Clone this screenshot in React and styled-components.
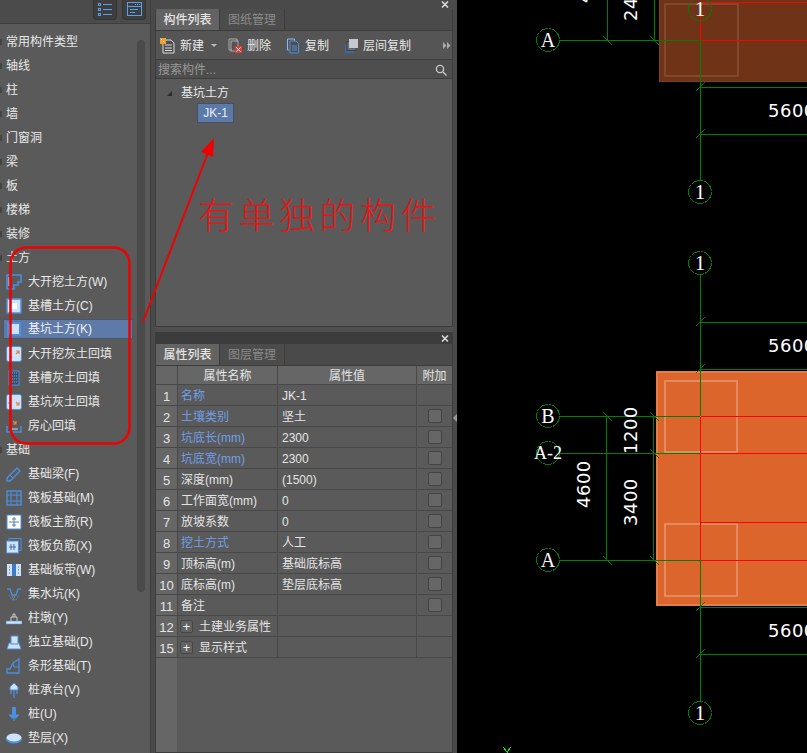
import React from "react";
import styled, { createGlobalStyle } from "styled-components";

const Global = createGlobalStyle`
  html, body { margin: 0; padding: 0; background: #000; }
  * { box-sizing: border-box; }
`;
const FONT = `"Liberation Sans", "Noto Sans CJK SC", sans-serif`;

const Page = styled.div`
  position: relative; display: flex; width: 807px; height: 753px; overflow: hidden;
  font: 12px/1 ${FONT}; color: #e8e8e8; background: #4c4c4c;
`;
const Sidebar = styled.aside`
  position: relative; width: 151px; flex: none; background: #5a5a5a; border-right: 1px solid #3c3c3c; overflow: hidden;
`;
const SideTop = styled.div`
  height: 24px; display: flex; justify-content: flex-end; align-items: flex-end; gap: 5px; padding: 0 4px 3px 0;
  background: #4b4b4b; border-bottom: 1px solid #3e3e3e;
`;
const SideBtn = styled.div`
  width: 24px; height: 21px; background: #3e3e3e; border: 1px solid #333; border-top: 0; border-radius: 0 0 4px 4px;
  display: flex; align-items: center; justify-content: center;
`;
const SideList = styled.div`padding-top: 5px;`;
const SideRow = styled.div`
  position: relative; height: 24px; display: flex; align-items: center; gap: 6px;
  padding: 1px 0 0 6px; color: #e8e8e8; white-space: nowrap;
  &::before {
    content: ""; display: ${p => (p.$section ? "block" : "none")}; position: absolute; left: 0; top: 10px;
    width: 2px; height: 6px; background: #444;
  }
`;
const Selected = styled(SideRow)`
  margin-left: 3px; width: 130px; padding: 0 0 0 2px; height: 20px; margin-top: 2px; margin-bottom: 2px;
  background: #5e7aa9; border: 1px solid #48566e; color: #f0f0f0;
`;
const Scroll = styled.div`
  position: absolute; left: 137px; top: 40px; width: 8px; height: 552px; background: #4a4a4a; border-radius: 4px;
`;
const Middle = styled.div`
  width: 306px; flex: none; display: flex; flex-direction: column; padding: 0 4px; background: #4a4a4a;
`;
const Strip = styled.div`
  height: ${p => p.$h}px; flex: none; display: flex; justify-content: flex-end; align-items: center; padding-right: 4px;
  background: ${p => p.$bg}; color: #ddd;
`;
const Panel = styled.section`
  flex: ${p => (p.$grow ? "1" : "none")}; height: ${p => (p.$grow ? "auto" : "318px")};
  display: flex; flex-direction: column; background: #5a5a5a; border: 1px solid #3c3c3c; border-top: 0;
`;
const Gap = styled.div`height: 5px; flex: none; background: #4f4f4f;`;
const Tabs = styled.div`display: flex; height: 22px; flex: none; background: #4a4a4a; border-bottom: 1px solid #3c3c3c;`;
const Tab = styled.div`
  width: ${p => (p.$active ? 64 : 65)}px; display: flex; align-items: center; justify-content: center; padding-top: 1px;
  background: ${p => (p.$active ? "#636363" : "#4c4c4c")}; color: ${p => (p.$active ? "#e4e4e4" : "#8a8a8a")};
  border-right: 1px solid #3c3c3c; font-weight: ${p => (p.$active ? 500 : 400)};
`;
const Toolbar = styled.div`
  height: 29px; flex: none; display: flex; align-items: center; padding: 1px 0 0 4px; background: #555; border-bottom: 1px solid #3e3e3e;
`;
const Tool = styled.div`
  display: flex; align-items: center; gap: ${p => p.$gap || 5}px; margin-right: ${p => p.$mr}px; white-space: nowrap;
`;
const Caret = styled.span`
  width: 0; height: 0; border: 3px solid transparent; border-top: 3px solid #bbb; border-bottom: 0; margin-left: 2px;
`;
const More = styled.svg`margin-left: auto; margin-right: 1px;`;
const Search = styled.div`
  height: 19px; flex: none; display: flex; align-items: center; justify-content: space-between; padding: 1px 5px 0 2px;
  background: #4e4e4e; color: #999; border-bottom: 1px solid #3e3e3e;
`;
const Tree = styled.div`flex: 1; padding: 6px 0 0 11px;`;
const TreeHead = styled.div`display: flex; align-items: center; gap: 9px; height: 16px; color: #e8e8e8;`;
const Tri = styled.span`
  width: 0; height: 0; border-left: 5px solid transparent; border-bottom: 5px solid #2c2c2c;
`;
const TreeLeaf = styled.div`
  margin: 2px 0 0 30px; width: 37px; height: 20px; display: flex; align-items: center; justify-content: center;
  background: #5c7aa8; border: 1px solid #454f60; color: #e8eefc;
`;
const Table = styled.div`
  flex: 1; display: flex; flex-direction: column;
  background: linear-gradient(90deg, #666 0, #666 21px, #5a5a5a 21px);
`;
const TRow = styled.div`
  display: grid; grid-template-columns: 22px 100px 139px 35px; height: ${p => (p.$head ? 19 : 21)}px;
  border-bottom: 1px solid #484848;
`;
const Cell = styled.div`
  display: flex; align-items: center; justify-content: ${p => (p.$center ? "center" : "flex-start")};
  padding: 2px 0 0 ${p => (p.$center ? 0 : p.$pad || 3)}px; border-right: 1px solid #484848; white-space: nowrap; min-width: 0;
  color: ${p => (p.$blue ? "#6f9fe8" : "#e4e4e4")}; background: ${p => (p.$head ? "#666" : p.$num ? "#666" : "transparent")};
  font-size: ${p => (p.$num ? 13 : 12)}px;
  &:last-child { border-right: 0; }
`;
const GroupCell = styled(Cell)`gap: 6px; padding-left: 2px;`;
const Check = styled.span`
  width: 14px; height: 14px; margin-top: -2px; border: 1px solid #444; border-radius: 2px; background: #666;
`;
const Plus = styled.span`
  width: 13px; height: 13px; display: flex; align-items: center; justify-content: center; flex: none; margin-top: -2px;
  border: 1px solid #474747; border-radius: 2px; background: #626262; color: #f0f0f0; font-size: 13px;
`;
const Splitter = styled.div`
  position: absolute; left: 453px; top: 414px; width: 0; height: 0;
  border: 4px solid transparent; border-right: 4px solid #999; border-left: 0;
`;
const Canvas = styled.div`flex: 1; background: #000; min-width: 0;`;
const Overlay = styled.svg`position: absolute; left: 0; top: 0; pointer-events: none;`;
const CadSvg = styled.svg`display: block;`;
const Note = styled.div`
  position: absolute; left: 198px; top: 192px; color: #e01818; font: 200 36px/1.2 "Noto Sans CJK SC", sans-serif;
  letter-spacing: 4.5px; white-space: nowrap;
`;

const B = "#4a8fe0", L = "#cfe2fa", O = "#e8833a";
const icons = {
  w: <><path d="M1 1h14v7h-3v3H8v4H1z" fill="#5a5a5a" stroke={B} strokeWidth="1.6" /><path d="M3 3v9" stroke={L} /></>,
  c: <><rect x="1" y="1" width="14" height="14" fill={L} stroke={B} strokeWidth="1.5" /><rect x="5" y="5" width="6" height="6" fill="#fff" /></>,
  k: <><rect x="1" y="1" width="14" height="14" fill={B} /><rect x="3" y="3" width="10" height="10" fill={L} /></>,
  dh: <><rect x="0.5" y="0.5" width="15" height="15" rx="2" fill={L} stroke={B} /><path d="M10 8l3-3M10 5h3v3M4 10l2 2" stroke={O} strokeWidth="1.2" fill="none" /></>,
  ch: <><rect x="3" y="1" width="10" height="14" fill="#35507a" stroke={B} /><path d="M4 3h8M4 6h8M4 9h8M4 12h8" stroke="#8aa" strokeDasharray="1 1" /></>,
  kh: <><rect x="0.5" y="0.5" width="15" height="15" rx="2" fill={L} stroke={B} /><path d="M2 9h3M10 8l3 3M13 8v3h-3" stroke={O} strokeWidth="1.2" fill="none" /></>,
  fx: <><path d="M1 8v6h14V8" fill="none" stroke={B} strokeWidth="1.5" /><path d="M7 3l3 3M10 3v3H7" stroke={O} strokeWidth="1.2" fill="none" /><path d="M4 11h8" stroke={L} /></>,
  l: <><path d="M1 12L11 2l3 3L4 15H1z" fill="none" stroke={B} strokeWidth="1.4" /><path d="M4 9l3 3" stroke={B} /></>,
  m: <><rect x="1" y="1" width="14" height="14" fill="none" stroke={B} strokeWidth="1.4" /><path d="M1 5h14M1 11h14M5 1v14M11 1v14" stroke={B} /></>,
  r: <><rect x="1" y="1" width="14" height="14" fill="#fff" stroke={B} /><path d="M8 3v10M3 8h10M6 5h4M6 11h4" stroke="#5a7ea8" fill="none" /></>,
  x: <><rect x="3" y="0.5" width="12" height="12" fill="none" stroke={B} /><rect x="0.5" y="3" width="12" height="12" fill={L} stroke={B} /><path d="M3 9h7M5 6v6M8 6v6" stroke="#3a6cb0" /></>,
  b: <><rect x="1" y="2" width="14" height="12" fill={L} /><rect x="6" y="2" width="4" height="12" fill="#3f78c4" /><path d="M3 5h1M3 8h1M3 11h1M12 5h1M12 8h1M12 11h1" stroke="#3f78c4" /></>,
  p: <><path d="M1 3h3l2 6h4l2-6h3" fill="none" stroke={B} strokeWidth="1.3" /><path d="M3 9l3 5h4l3-5" fill="none" stroke={B} strokeDasharray="1 1" /><path d="M6 11h4M7 13h2" stroke="#aaa" strokeDasharray="1 1" /></>,
  y: <><rect x="0" y="11" width="16" height="3" fill={L} stroke={B} strokeWidth="0.6" /><path d="M5 11V7h6v4M7 7V4h2v3" fill="none" stroke="#ccc" /></>,
  d: <><path d="M1 15l2-6h10l2 6z" fill={L} stroke={B} /><rect x="5" y="2" width="7" height="8" fill={L} stroke={B} /></>,
  t: <><path d="M1 15v-4h3l3-6 6-4v14z" fill="#5a5a5a" stroke={B} strokeWidth="1.3" /><path d="M7 5l1 4h5" stroke={B} fill="none" /></>,
  v: <><path d="M8 1l4 4v3H4V5z" fill={L} stroke={B} /><path d="M8 8v8M5 8v4M11 8v4" stroke={B} strokeWidth="1.3" /></>,
  u: <><rect x="6" y="1" width="4" height="9" rx="1" fill={B} /><path d="M3 9h10l-3 3H6zM8 12v3" fill={B} stroke={B} /></>,
  z: <><ellipse cx="8" cy="9" rx="8" ry="4.5" fill={B} /><ellipse cx="8" cy="7.5" rx="7.5" ry="4" fill={L} /></>,
};
const Icon = ({ n }) => <svg width="16" height="16" viewBox="0 0 16 16" style={{ flex: "none" }}>{icons[n]}</svg>;

const sections = ["常用构件类型", "轴线", "柱", "墙", "门窗洞", "梁", "板", "楼梯", "装修", "土方"];
const earth = [["w", "大开挖土方(W)"], ["c", "基槽土方(C)"], ["k", "基坑土方(K)", 1], ["dh", "大开挖灰土回填"], ["ch", "基槽灰土回填"], ["kh", "基坑灰土回填"], ["fx", "房心回填"]];
const base = [["l", "基础梁(F)"], ["m", "筏板基础(M)"], ["r", "筏板主筋(R)"], ["x", "筏板负筋(X)"], ["b", "基础板带(W)"], ["p", "集水坑(K)"], ["y", "柱墩(Y)"], ["d", "独立基础(D)"], ["t", "条形基础(T)"], ["v", "桩承台(V)"], ["u", "桩(U)"], ["z", "垫层(X)"]];

const props = [
  ["1", "名称", "JK-1", 1, 0],
  ["2", "土壤类别", "坚土", 1, 1],
  ["3", "坑底长(mm)", "2300", 1, 1],
  ["4", "坑底宽(mm)", "2300", 1, 1],
  ["5", "深度(mm)", "(1500)", 0, 1],
  ["6", "工作面宽(mm)", "0", 0, 1],
  ["7", "放坡系数", "0", 0, 1],
  ["8", "挖土方式", "人工", 1, 1],
  ["9", "顶标高(m)", "基础底标高", 0, 1],
  ["10", "底标高(m)", "垫层底标高", 0, 1],
  ["11", "备注", "", 0, 1],
];

const Close = () => (
  <svg width="8" height="7" viewBox="0 0 8 7"><path d="M1 0.5l6 6M7 0.5l-6 6" stroke="#ddd" strokeWidth="1.5" /></svg>
);

const G = "#008000", R = "#ff0000";
const Tick = ({ x, y, back }) => (
  <path d={back ? `M${x - 4} ${y - 4}L${x + 5} ${y + 5}` : `M${x - 4} ${y + 4}L${x + 5} ${y - 5}`} stroke={G} />
);
const Bubble = ({ x, y, t, size = 21 }) => (
  <g>
    <circle cx={x} cy={y} r="11.5" fill="none" stroke={G} strokeDasharray="3 0.4" />
    <text x={x} y={y + size * 0.34} fontSize={size} fill="#fff" textAnchor="middle" fontFamily="Liberation Serif, serif">{t}</text>
  </g>
);
const Dim = ({ x, y, t, rot }) => (
  <text x={x} y={y} transform={rot ? `rotate(-90 ${x} ${y})` : undefined} fontSize="18" fill="#fff" letterSpacing="0.5" fontFamily="DejaVu Sans, sans-serif">{t}</text>
);

const Cad = () => (
  <CadSvg width="350" height="753" viewBox="457 0 350 753" shapeRendering="crispEdges">
    <rect x="659" y="-2" width="150" height="83" fill="#6f3318" stroke="#7a4026" />
    <rect x="664.5" y="3.5" width="73" height="72" fill="none" stroke="#80492f" strokeWidth="2" />
    <path d="M700.5 2.5H807M700.5 40.5H807M700.5 2.5V40.5" stroke={R} fill="none" />
    <path d="M559 40.5H700.5V181M607 0V40M654 0V40M700 87.5H807M700 134.5H807" stroke={G} fill="none" />
    <Tick x={607} y={40} back /><Tick x={654} y={40} back />
    <Tick x={700} y={87} /><Tick x={700} y={134} />
    <Bubble x={700} y={9} t="1" />
    <Bubble x={548} y={40} t="A" size={20} />
    <Bubble x={700} y={192} t="1" />
    <Dim x={637} y={21} t="2400" rot />
    <Dim x={590} y={3} t="4600" rot />
    <Dim x={768} y={117} t="5600" />

    <rect x="656.5" y="371.5" width="160" height="233" fill="#dc652c" stroke="#e67c4a" strokeWidth="2" />
    <rect x="665" y="380.5" width="72" height="71" fill="none" stroke="#e48a60" strokeWidth="2" />
    <rect x="665" y="524" width="72" height="72" fill="none" stroke="#e48a60" strokeWidth="2" />
    <path d="M700.5 416.5H807M700.5 453.5H807M700.5 522.5H807M700.5 560.5H807M700.5 416.5V560.5" stroke={R} fill="none" />
    <path d="M700.5 274V416M700.5 560V702M559 416.5H700M559 453.5H700M559 560.5H700M606.5 416V560M653.5 416V560M700 322.5H807M700 369.5H807M700 607.5H807M700 654.5H807" stroke={G} fill="none" />
    <Tick x={607} y={416} back /><Tick x={654} y={416} back /><Tick x={654} y={453} back />
    <Tick x={607} y={560} back /><Tick x={654} y={560} back />
    <Tick x={700} y={322} /><Tick x={700} y={369} /><Tick x={700} y={607} /><Tick x={700} y={654} />
    <Bubble x={700} y={263} t="1" />
    <Bubble x={548} y={416} t="B" size={20} />
    <Bubble x={548} y={453} t="A-2" size={18} />
    <Bubble x={548} y={560} t="A" size={20} />
    <Bubble x={700} y={713} t="1" />
    <Dim x={637} y={454} t="1200" rot />
    <Dim x={637} y={526} t="3400" rot />
    <Dim x={590} y={508} t="4600" rot />
    <Dim x={768} y={352} t="5600" />
    <Dim x={768} y={637} t="5600" />
    <path d="M503 747l4 5 4-5M507 752v2" stroke="#00ff00" fill="none" />
  </CadSvg>
);

export default function App() {
  return (
    <Page>
      <Global />
      <Sidebar>
        <SideTop>
          <SideBtn>
            <svg width="16" height="16" viewBox="0 0 16 16" fill="none" stroke="#5aa0e8">
              <rect x="1.5" y="2.5" width="2" height="2" /><rect x="1.5" y="7.5" width="2" height="2" /><rect x="1.5" y="12.5" width="2" height="2" />
              <path d="M6 3.5h9M6 8.5h9M6 13.5h9" />
            </svg>
          </SideBtn>
          <SideBtn>
            <svg width="16" height="16" viewBox="0 0 16 16" fill="none" stroke="#5aa0e8">
              <rect x="1.5" y="1.5" width="14" height="13" /><path d="M1.5 5.5h14M4 8.5h8M4 11.5h5" /><path d="M9 3.5h1M11 3.5h1M13 3.5h1" />
            </svg>
          </SideBtn>
        </SideTop>
        <SideList>
          {sections.map(s => <SideRow $section key={s}>{s}</SideRow>)}
          {earth.map(([i, t, sel]) => sel
            ? <Selected key={t}><Icon n={i} />{t}</Selected>
            : <SideRow key={t}><Icon n={i} />{t}</SideRow>)}
          <SideRow $section>基础</SideRow>
          {base.map(([i, t]) => <SideRow key={t}><Icon n={i} />{t}</SideRow>)}
        </SideList>
        <Scroll />
      </Sidebar>

      <Middle>
        <Strip $h={9} $bg="#4a4a4a"><Close /></Strip>
        <Panel>
          <Tabs><Tab $active>构件列表</Tab><Tab>图纸管理</Tab></Tabs>
          <Toolbar>
            <Tool $mr={11}>
              <svg width="15" height="16" viewBox="0 0 15 16"><path d="M3 2h8l3 3v10H3z" fill="#4e4e4e" stroke="#ddd" /><path d="M5 7h7M5 10h7M5 12.5h7" stroke="#ddd" /><rect x="0" y="0" width="6" height="6" fill="#f0a030" /><path d="M1 1h1v1H1zM3 3h1v1H3z" fill="#fff" /></svg>
              新建<Caret />
            </Tool>
            <Tool $mr={16}>
              <svg width="14" height="16" viewBox="0 0 14 16"><path d="M1 1h8v3M1 1v11h3" fill="none" stroke="#aaa" /><rect x="3" y="3" width="7" height="10" fill="none" stroke="#aaa" /><rect x="7" y="8" width="7" height="7" fill="#d84040" /><path d="M8.5 9.5l4 4M12.5 9.5l-4 4" stroke="#fff" /></svg>
              删除
            </Tool>
            <Tool $mr={16} $gap={6}>
              <svg width="12" height="16" viewBox="0 0 12 16"><path d="M0.5 1h7v2M0.5 1v11h2" fill="none" stroke="#8fb8e8" /><path d="M3 3h6l2.5 2.5V15H3z" fill="#4e4e4e" stroke="#4a8fe0" /><path d="M5 8h5M5 10h5M5 12h5" stroke="#4a8fe0" /></svg>
              复制
            </Tool>
            <Tool $mr={0}>
              <svg width="13" height="16" viewBox="0 0 13 16"><rect x="0" y="6" width="9" height="9" fill="#3868a8" /><rect x="2" y="3.5" width="9" height="9" fill="#6a6a6a" stroke="#444" /><rect x="4" y="1" width="9" height="9" fill="#c8c8d0" /></svg>
              层间复制
            </Tool>
            <More width="8" height="7" viewBox="0 0 8 7"><path d="M0 0l3.5 3.5L0 7zM4 0l3.5 3.5L4 7z" fill="#aaa" /></More>
          </Toolbar>
          <Search>
            搜索构件...
            <svg width="12" height="12" viewBox="0 0 12 12" fill="none" stroke="#c8c8c8" strokeWidth="1.4"><circle cx="5" cy="5" r="3.6" /><path d="M8 8l3.5 3.5" /></svg>
          </Search>
          <Tree>
            <TreeHead><Tri />基坑土方</TreeHead>
            <TreeLeaf>JK-1</TreeLeaf>
          </Tree>
        </Panel>
        <Gap />
        <Strip $h={12} $bg="#3c3c3c"><Close /></Strip>
        <Panel $grow>
          <Tabs><Tab $active>属性列表</Tab><Tab>图层管理</Tab></Tabs>
          <Table>
            <TRow $head>
              <Cell $head />
              <Cell $head $center>属性名称</Cell>
              <Cell $head $center>属性值</Cell>
              <Cell $head $center>附加</Cell>
            </TRow>
            {props.map(([n, k, v, blue, chk]) => (
              <TRow key={n}>
                <Cell $num $center>{n}</Cell>
                <Cell $blue={blue}>{k}</Cell>
                <Cell $pad={4}>{v}</Cell>
                <Cell $center>{chk ? <Check /> : null}</Cell>
              </TRow>
            ))}
            {[["12", "土建业务属性"], ["15", "显示样式"]].map(([n, t]) => (
              <TRow key={n}>
                <Cell $num $center>{n}</Cell>
                <GroupCell><Plus>+</Plus>{t}</GroupCell>
                <Cell />
                <Cell />
              </TRow>
            ))}
          </Table>
        </Panel>
      </Middle>
      <Splitter />

      <Canvas><Cad /></Canvas>

      <Overlay width="807" height="753" viewBox="0 0 807 753">
        <rect x="10.5" y="247.5" width="119" height="196" rx="16" fill="none" stroke="#f00000" strokeWidth="2.5" />
        <path d="M143 322L209 150" stroke="#f00000" strokeWidth="2" />
        <path d="M214 138L213 157L201 152z" fill="#f00000" />
      </Overlay>
      <Note>有单独的构件</Note>
    </Page>
  );
}
